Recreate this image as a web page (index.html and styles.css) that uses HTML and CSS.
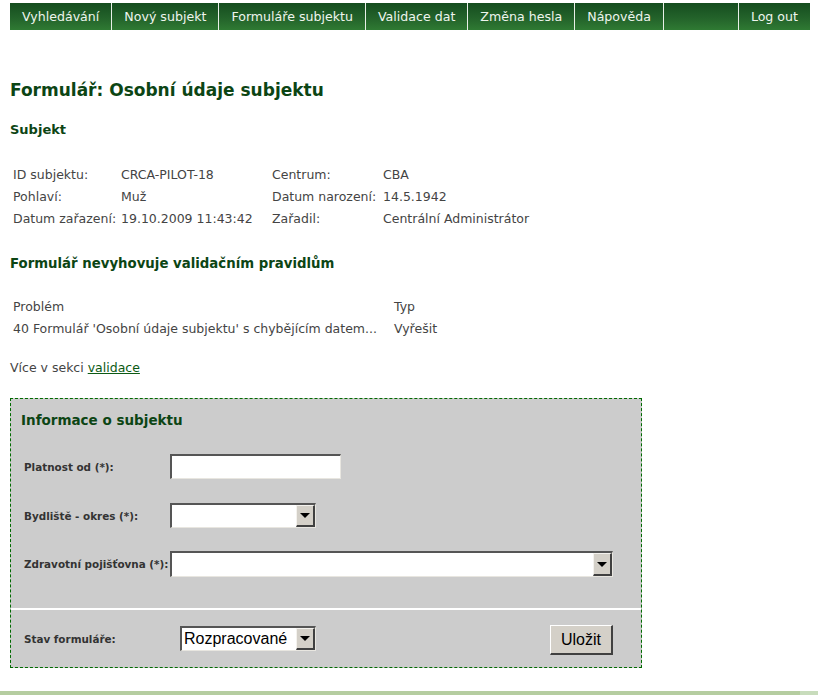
FILE: index.html
```html
<!DOCTYPE html>
<html lang="cs">
<head>
<meta charset="utf-8">
<title>Formulář: Osobní údaje subjektu</title>
<link rel="stylesheet" href="styles.css">
</head>
<body>
<div class="page">
  <nav class="nav">
    <a class="nav-item" href="#">Vyhledávání</a>
    <a class="nav-item" href="#">Nový subjekt</a>
    <a class="nav-item" href="#">Formuláře subjektu</a>
    <a class="nav-item" href="#">Validace dat</a>
    <a class="nav-item" href="#">Změna hesla</a>
    <a class="nav-item" href="#">Nápověda</a>
    <span class="nav-item nav-spacer"></span>
    <a class="nav-item" href="#">Log out</a>
  </nav>

  <h1 class="title">Formulář: Osobní údaje subjektu</h1>

  <h2 class="section">Subjekt</h2>
  <div class="info-grid">
    <span>ID subjektu:</span><span>CRCA-PILOT-18</span><span>Centrum:</span><span>CBA</span>
    <span>Pohlaví:</span><span>Muž</span><span>Datum narození:</span><span>14.5.1942</span>
    <span>Datum zařazení:</span><span>19.10.2009 11:43:42</span><span>Zařadil:</span><span>Centrální Administrátor</span>
  </div>

  <h2 class="section section-val">Formulář nevyhovuje validačním pravidlům</h2>
  <div class="val-grid">
    <span>Problém</span><span>Typ</span>
    <span>40 Formulář 'Osobní údaje subjektu' s chybějícím datem...</span><span>Vyřešit</span>
  </div>

  <p class="more">Více v sekci <a href="#">validace</a></p>

  <form class="box">
    <h3 class="box-title">Informace o subjektu</h3>
    <div class="rows">
      <div class="row">
        <label class="lbl">Platnost od (*):</label>
        <div class="field input-date"></div>
      </div>
      <div class="row">
        <label class="lbl">Bydliště - okres (*):</label>
        <div class="field combo combo-okres"><span class="combo-val"></span><span class="combo-btn"><span class="tri"></span></span></div>
      </div>
      <div class="row row-tall">
        <label class="lbl">Zdravotní pojišťovna (*):</label>
        <div class="field combo combo-zp"><span class="combo-val"></span><span class="combo-btn"><span class="tri"></span></span></div>
      </div>
    </div>
    <div class="box-foot">
      <label class="lbl lbl-stav">Stav formuláře:</label>
      <div class="field combo combo-stav"><span class="combo-val">Rozpracované</span><span class="combo-btn"><span class="tri"></span></span></div>
      <button type="button" class="btn">Uložit</button>
    </div>
  </form>
</div>
<div class="footer-bar"></div>
</body>
</html>
```

FILE: styles.css
```css
html, body {
  margin: 0;
  padding: 0;
  background: #ffffff;
}

body {
  font-family: "DejaVu Sans", Verdana, sans-serif;
  font-size: 12.5px;
  color: #444444;
}

.page {
  padding: 3px 8px 0 10px;
}

/* Navigation */
.nav {
  display: flex;
  width: 800px;
  height: 27px;
  background: linear-gradient(to bottom, #154d1f 0%, #23622a 55%, #2f7a33 100%);
}

.nav-item {
  display: flex;
  align-items: center;
  padding: 0 12px;
  color: #eef5ee;
  text-decoration: none;
  font-size: 12.6px;
  border-right: 1px solid #e8efe8;
  white-space: nowrap;
}

.nav-item:last-child {
  border-right: none;
  flex: 1;
  justify-content: center;
}

.nav-spacer {
  width: 51px;
}

/* Headings */
.title {
  margin: 48px 0 0;
  font-size: 17px;
  line-height: 24px;
  font-weight: bold;
  color: #0c4514;
}

.section {
  margin: 19px 0 0;
  font-size: 13px;
  line-height: 18px;
  font-weight: bold;
  color: #0c4514;
}

.section-val {
  margin-top: 26px;
  font-size: 13.3px;
}

/* Info grid */
.info-grid {
  display: grid;
  grid-template-columns: 108px 151px 111px auto;
  grid-auto-rows: 22px;
  align-items: center;
  margin-top: 24px;
  padding-left: 3px;
  color: #444444;
}

.val-grid {
  display: grid;
  grid-template-columns: 381px auto;
  grid-auto-rows: 22px;
  align-items: center;
  margin-top: 22px;
  padding-left: 3px;
}

.more {
  margin: 21px 0 0;
  line-height: 16px;
}

.more a {
  color: #0c5a14;
  text-decoration: underline;
}

/* Box */
.box {
  margin-top: 22px;
  width: 630px;
  border: 1px dashed #006a00;
  background: #cccccc;
}

.box-title {
  margin: 0;
  padding: 12px 10px 0;
  font-size: 13.5px;
  line-height: 18px;
  font-weight: bold;
  color: #0c4514;
}

.rows {
  display: flex;
  flex-direction: column;
  gap: 24px;
  padding: 25px 28px 0 13px;
}

.row {
  display: flex;
  align-items: center;
  height: 25px;
}

.row-tall {
  height: 26px;
  margin-top: -1px;
}

.lbl {
  width: 146px;
  flex: none;
  font-size: 10.4px;
  font-weight: bold;
  color: #333333;
}

.field {
  box-sizing: border-box;
  background: #ffffff;
  border-top: 2px solid #555555;
  border-left: 2px solid #555555;
  border-right: 1px solid #e8e6e0;
  border-bottom: 1px solid #e8e6e0;
  height: 100%;
}

.input-date {
  width: 171px;
}

.combo {
  display: flex;
}

.combo-okres {
  width: 146px;
}

.combo-zp {
  width: 443px;
}

.combo-val {
  flex: 1;
  display: flex;
  align-items: center;
  padding-left: 2px;
  font-family: "Liberation Sans", Arial, sans-serif;
  font-size: 16px;
  color: #000000;
  overflow: hidden;
  white-space: nowrap;
}

.combo-btn {
  box-sizing: border-box;
  width: 19px;
  flex: none;
  display: flex;
  align-items: center;
  justify-content: center;
  background: #d4d0c8;
  border-top: 1px solid #f4f2ee;
  border-left: 1px solid #f4f2ee;
  border-right: 2px solid #404040;
  border-bottom: 2px solid #404040;
}

.tri {
  width: 0;
  height: 0;
  border-left: 5px solid transparent;
  border-right: 5px solid transparent;
  border-top: 5px solid #000000;
}

.box-foot {
  display: flex;
  align-items: center;
  margin-top: 31px;
  height: 57px;
  border-top: 2px solid #ffffff;
  padding: 0 28px 0 13px;
}

.lbl-stav {
  width: 156px;
}

.combo-stav {
  width: 136px;
  height: 25px;
}

.btn {
  margin-left: auto;
  margin-top: 3px;
  box-sizing: border-box;
  width: 63px;
  height: 30px;
  padding: 0;
  background: #d4d0c8;
  border-top: 1px solid #ffffff;
  border-left: 1px solid #ffffff;
  border-right: 2px solid #404040;
  border-bottom: 2px solid #404040;
  font-family: "Liberation Sans", Arial, sans-serif;
  font-size: 16px;
  color: #000000;
}

.footer-bar {
  margin-top: 23px;
  height: 4px;
  background: linear-gradient(to right, #b5cda0 800px, #c8dcbc 800px);
}
```
